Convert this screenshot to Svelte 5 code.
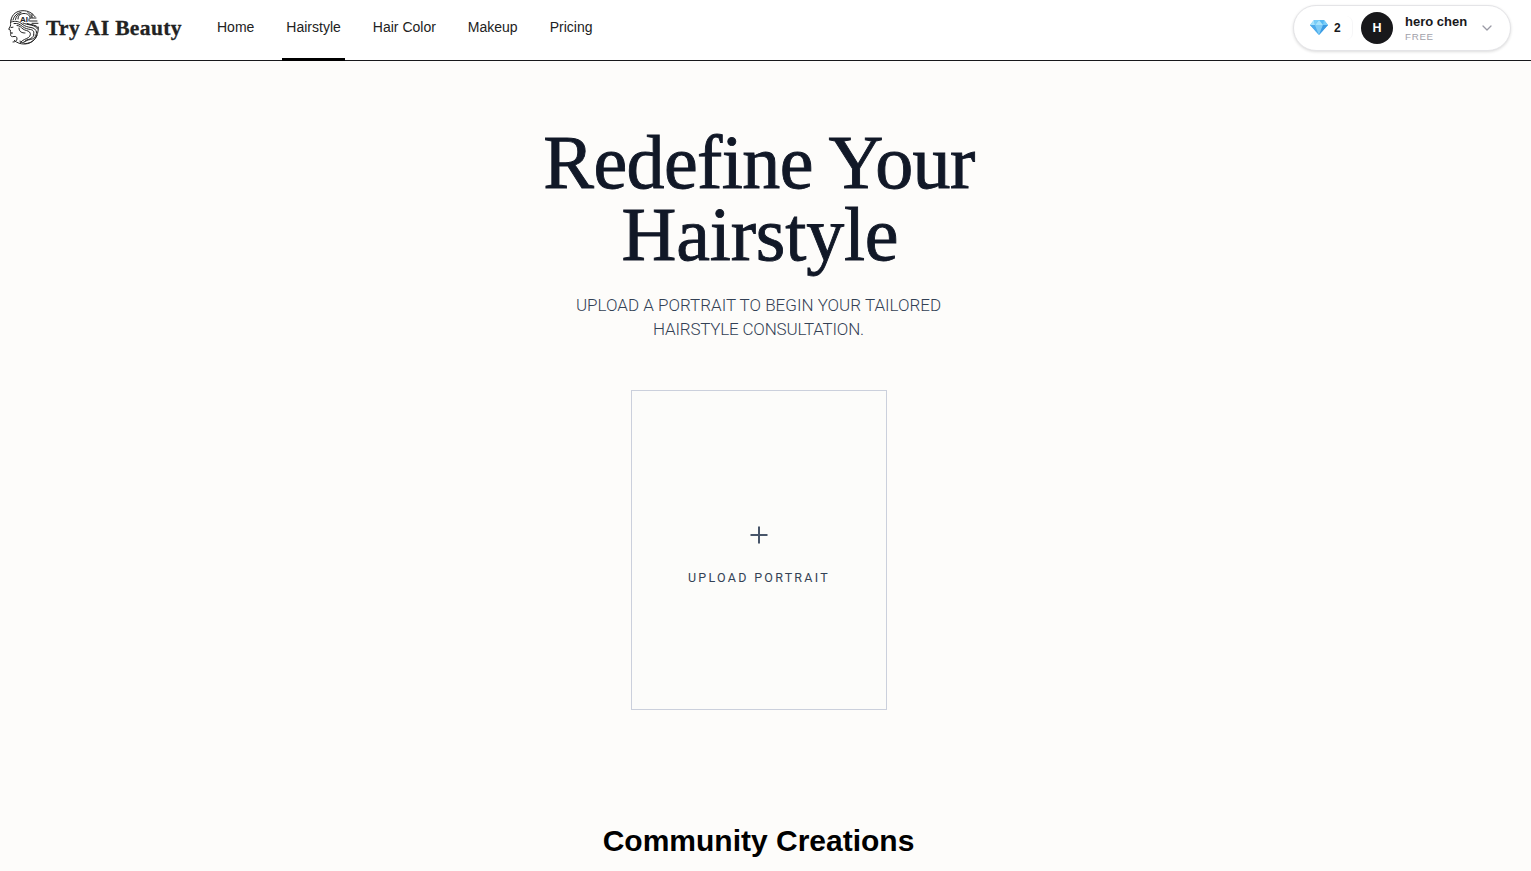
<script lang="ts">
    interface NavItem {
        name: string;
        href: string;
    }

    const navItems: NavItem[] = [
        { name: "Home", href: "#home" },
        { name: "Hairstyle", href: "#hairstyle" },
        { name: "Hair Color", href: "#hair-color" },
        { name: "Makeup", href: "#makeup" },
        { name: "Pricing", href: "#pricing" },
    ];

    const user = { name: "hero chen", plan: "FREE", credits: 2 };

    let active = $state("Hairstyle");
</script>

<div class="page">
    <header class="header">
        <a class="brand" href="#home">
            <svg class="logo" viewBox="0 0 31 35" fill="none" stroke="#222" stroke-width="1" stroke-linecap="round">
                <!-- face and neck -->
                <path d="M3 10c-1 3 0 4-.6 6L.7 19.300l1.700.8v1.600l.6 1.300-.4 1.400c0 2 1 2.600 3.400 2.100 2-.4 3 .5 3 2.500 0 2-2 3-4 3" />
                <path d="M3 17.500l2-.3M3 23h1.500" />
                <!-- crown -->
                <path d="M3 10C4 4 9 .7 15 .7c5 0 9 2 12 6" />
                <path d="M5 10c1-4 4-7 8-7.500M7.500 9.500C8 6 10 4.500 12 4M10 9c0-4 3-5.500 6-5.500 4 0 6 2 6 5" />
                <!-- circuit lines -->
                <path d="M20 2.500l3 3v3M24 4v4h4M22 11h7M24 13.300h6M21 9v2" />
                <!-- strands -->
                <path d="M3 12c5-1.500 8-.5 11 2s6 3 9 3.500 5 2 5.500 4.500" />
                <path d="M6 13.500c4-.5 6 1 8.500 3s5 2.500 8 3 4 2.500 3 5" />
                <path d="M9 15.500c3 0 4 2 6 3.500s5 1.500 6.500 3 1 4-1 5.500-6 2-8 5" />
                <path d="M11 18c0 4 3 5 6 5M15 13c5 2.500 12 1 14.500 6M19 13.500c4 1.500 9 1 11 4" />
                <path d="M30.300 17c.5 9-5 17-14 17-4 0-7-1-10-3.500M28.500 22c0 5-3 7-6 7.500s-4 1-5 2M26 25c-2 5-7 4-9 6s-1 3 1 2.500c5-.5 9-3 11-8" />
                <path d="M12 31c0 2 3 2 4 1" />
                <text x="12" y="12" font-size="8" font-weight="700" fill="#222" stroke="none">AI</text>
            </svg>
            <span class="brand-name">Try AI Beauty</span>
        </a>

        <nav class="nav">
            {#each navItems as item (item.name)}
                <a
                    class="nav-link"
                    class:active={active === item.name}
                    href={item.href}
                    onclick={() => (active = item.name)}>{item.name}</a
                >
            {/each}
        </nav>

        <button class="account">
            <span class="credits">
                <svg class="gem" viewBox="0 0 18 16">
                    <path fill="#55b9f3" d="M4 1h10l4 5-9 10L0 6z" />
                    <path fill="#a5e2fc" d="M4 1l1 5H0zM9 1l4 5H5z" />
                    <path fill="#79cdf8" d="M4 1h5L5 6zM14 1l4 5h-5z" />
                    <path fill="#4fabeb" d="M0 6h5l4 10z" />
                    <path fill="#7ecbf6" d="M5 6h8L9 16z" />
                    <path fill="#3d9be2" d="M13 6h5L9 16z" />
                </svg>
                {user.credits}
            </span>
            <span class="avatar">H</span>
            <span class="who">
                <span class="user-name">{user.name}</span>
                <span class="plan">{user.plan}</span>
            </span>
            <svg class="chevron" viewBox="0 0 10 6" fill="none" stroke="#9a9aa5" stroke-width="1.3" stroke-linecap="round" stroke-linejoin="round">
                <path d="M1 1l4 4 4-4" />
            </svg>
        </button>
    </header>

    <main class="main">
        <h1 class="title">
            <span class="line first">Redefine Your</span>
            <span class="line second">Hairstyle</span>
        </h1>
        <p class="subtitle">
            <span class="line">Upload a portrait to begin your tailored</span>
            <span class="line narrow">hairstyle consultation.</span>
        </p>

        <button class="upload">
            <svg class="plus" viewBox="0 0 18 18" stroke="#475569" stroke-width="2">
                <path d="M9 .5v17M.5 9h17" />
            </svg>
            <span class="upload-label">Upload Portrait</span>
        </button>

        <h2 class="community">Community Creations</h2>
    </main>
</div>

<style>
    :global(body) {
        background: #fdfcfa;
        overflow: hidden;
    }

    .page {
        height: 871px;
        overflow: hidden;
        font-family: "Liberation Sans", Arial, sans-serif;
        color: #18181b;
    }

    .header {
        display: flex;
        align-items: center;
        box-sizing: border-box;
        height: 61px;
        padding: 0 20px 5px 8px;
        background: #fff;
        border-bottom: 1px solid #18181b;
    }

    .brand {
        display: flex;
        align-items: center;
        width: 205px;
        color: #222;
        text-decoration: none;
    }

    .logo {
        width: 31px;
        height: 35px;
        margin-right: 7px;
    }

    .brand-name {
        padding-top: 2px;
        font-family: Georgia, "Liberation Serif", serif;
        font-size: 21.5px;
        font-weight: 700;
        letter-spacing: 0.38px;
        white-space: nowrap;
        -webkit-text-stroke: 0.3px #222;
    }

    .nav {
        display: flex;
        align-self: flex-start;
        gap: 24px;
    }

    .nav-link {
        box-sizing: border-box;
        height: 61px;
        padding: 0 4px;
        font-size: 14px;
        line-height: 55px;
        color: #222;
        text-decoration: none;
        white-space: nowrap;
    }

    .nav-link.active {
        border-bottom: 3px solid #000;
    }

    .account {
        display: flex;
        align-items: center;
        box-sizing: border-box;
        width: 218px;
        height: 46px;
        margin-left: auto;
        padding: 0 18px 0 16px;
        background: #fff;
        border: 1px solid #e4e4e7;
        border-radius: 23px;
        box-shadow: 0 1px 3px rgba(0, 0, 0, 0.14);
        font-family: inherit;
        color: inherit;
        text-align: left;
    }

    .credits {
        display: flex;
        align-items: center;
        box-sizing: border-box;
        width: 43px;
        height: 24px;
        margin-right: 8px;
        border-right: 1px solid #f6f6f7;
        border-radius: 7px;
        font-size: 12px;
        font-weight: 700;
        gap: 6px;
    }

    .gem {
        width: 18px;
        height: 16px;
        margin-top: -1px;
    }

    .avatar {
        width: 32px;
        height: 32px;
        border-radius: 50%;
        background: #18181b;
        color: #fff;
        font-size: 12.5px;
        font-weight: 700;
        line-height: 32px;
        text-align: center;
    }

    .who {
        display: flex;
        flex-direction: column;
        margin-left: 12px;
        padding-top: 2px;
    }

    .user-name {
        font-size: 13px;
        font-weight: 700;
        line-height: 16px;
        white-space: nowrap;
    }

    .plan {
        font-size: 9.75px;
        line-height: 14px;
        letter-spacing: 0.7px;
        color: #a1a1aa;
    }

    .chevron {
        width: 10px;
        height: 6px;
        margin-left: auto;
    }

    .main {
        display: flex;
        flex-direction: column;
        align-items: center;
        padding: 65px 13px 0 0;
    }

    .title {
        margin: 0;
        font-family: Georgia, "Liberation Serif", serif;
        font-size: 76px;
        font-weight: 400;
        line-height: 72px;
        text-align: center;
        color: #111827;
        -webkit-text-stroke: 0.9px #111827;
    }

    .line {
        display: block;
    }

    .first {
        letter-spacing: -0.6px;
    }

    .second {
        padding-left: 2px;
        letter-spacing: -0.2px;
    }

    .subtitle {
        margin: 23px 1px 0 0;
        font-family: Roboto, "Liberation Sans", sans-serif;
        font-size: 17px;
        font-weight: 300;
        line-height: 24px;
        text-align: center;
        text-transform: uppercase;
        color: #334155;
    }

    .narrow {
        letter-spacing: -0.2px;
    }

    .upload {
        display: flex;
        flex-direction: column;
        align-items: center;
        box-sizing: border-box;
        width: 256px;
        height: 320px;
        margin: 49px 0 0;
        padding: 135px 0 0;
        background: #fcfcfa;
        border: 1px solid #cbd0dc;
    }

    .plus {
        width: 18px;
        height: 18px;
        margin-right: 1px;
    }

    .upload-label {
        margin-top: 25px;
        font-family: Roboto, "Liberation Sans", sans-serif;
        font-size: 12.5px;
        line-height: 18px;
        letter-spacing: 2.27px;
        text-transform: uppercase;
        color: #334155;
    }

    .community {
        margin: 113px 1px 0 0;
        font-size: 30px;
        font-weight: 700;
        line-height: 36px;
        color: #000;
    }
</style>
